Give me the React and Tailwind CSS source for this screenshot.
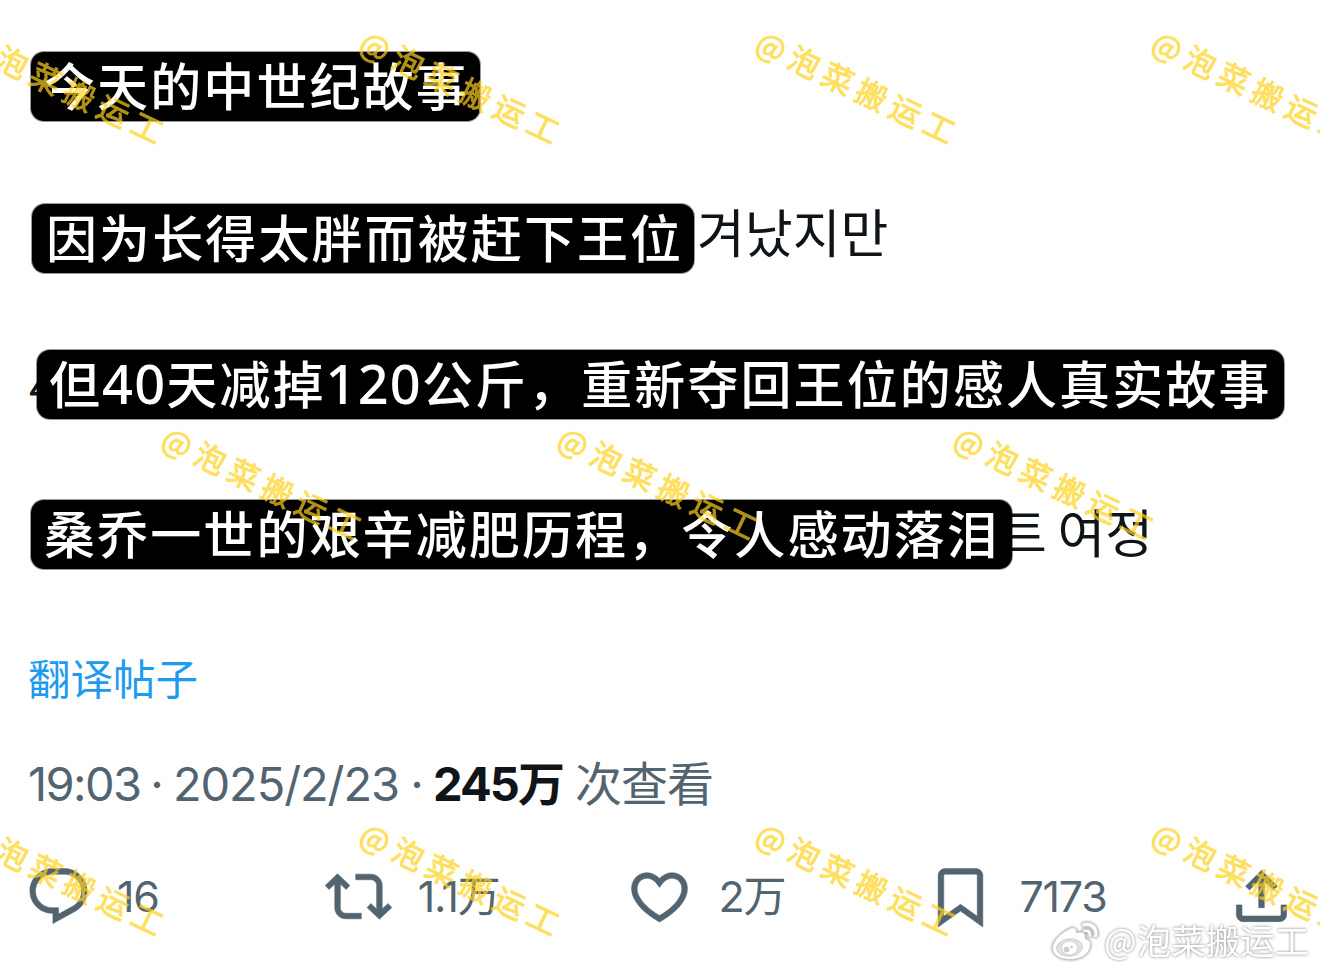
import React from 'react';

const WATERMARK = '@泡菜搬运工';

// Marcas de agua: posición del centro de la @ de cada repetición
const marks = [
  { x: -22, y: 48 }, { x: 374, y: 48 }, { x: 770, y: 48 }, { x: 1166, y: 48 },
  { x: 176, y: 444 }, { x: 572, y: 444 }, { x: 968, y: 444 },
  { x: -22, y: 840 }, { x: 374, y: 840 }, { x: 770, y: 840 }, { x: 1166, y: 840 },
];

const actions = [
  {
    label: '16',
    path: 'M1.751 10c0-4.42 3.584-8 8.005-8h4.366c4.49 0 8.129 3.64 8.129 8.13 0 2.96-1.607 5.68-4.196 7.11l-8.054 4.46v-3.69h-.067c-4.49.1-8.183-3.51-8.183-8.01zm8.005-6c-3.317 0-6.005 2.69-6.005 6 0 3.37 2.77 6.08 6.138 6.01l.351-.01h1.761v2.3l5.087-2.81c1.951-1.08 3.163-3.13 3.163-5.36 0-3.39-2.744-6.13-6.129-6.13H9.756z',
  },
  {
    label: '1.1万',
    path: 'M4.5 3.88l4.432 4.14-1.364 1.46L5.5 7.55V16c0 1.1.896 2 2 2H13v2H7.5c-2.209 0-4-1.79-4-4V7.55L1.432 9.48.068 8.02 4.5 3.88zM16.5 6H11V4h5.5c2.209 0 4 1.79 4 4v8.45l2.068-1.93 1.364 1.46-4.432 4.14-4.432-4.14 1.364-1.46 2.068 1.93V8c0-1.1-.896-2-2-2z',
  },
  {
    label: '2万',
    path: 'M16.697 5.5c-1.222-.06-2.679.51-3.89 2.16l-.805 1.09-.806-1.09C9.984 6.01 8.526 5.44 7.304 5.5c-1.243.07-2.349.78-2.91 1.91-.552 1.12-.633 2.78.479 4.82 1.074 1.97 3.257 4.27 7.129 6.61 3.87-2.34 6.052-4.64 7.126-6.61 1.111-2.04 1.03-3.7.477-4.82-.561-1.13-1.666-1.84-2.908-1.91zm4.187 7.69c-1.351 2.48-4.001 5.12-8.379 7.67l-.503.3-.504-.3c-4.379-2.55-7.029-5.19-8.382-7.67-1.36-2.5-1.41-4.86-.514-6.67.887-1.79 2.647-2.91 4.601-3.01 1.651-.09 3.368.56 4.798 2.01 1.429-1.45 3.146-2.1 4.796-2.01 1.954.1 3.714 1.22 4.601 3.01.896 1.81.846 4.17-.514 6.67z',
  },
  {
    label: '7173',
    path: 'M4 4.5C4 3.12 5.119 2 6.5 2h11C18.881 2 20 3.12 20 4.5v18.44l-8-5.71-8 5.71V4.5zM6.5 4c-.276 0-.5.22-.5.5v14.56l6-4.29 6 4.29V4.5c0-.28-.224-.5-.5-.5h-11z',
  },
  {
    label: '',
    path: 'M12 2.59l5.7 5.7-1.41 1.42L13 6.41V16h-2V6.41l-3.3 3.3-1.41-1.42L12 2.59zM21 15l-.02 3.51c0 1.38-1.12 2.49-2.5 2.49H5.5C4.11 21 3 19.88 3 18.5V15h2v3.5c0 .28.22.5.5.5h12.98c.28 0 .5-.22.5-.5L19 15h2z',
  },
];

const Caption = ({ className, children }) => (
  <div className={`h-[69px] shrink-0 rounded-[13px] bg-black text-white text-[51px] leading-[64px] font-medium tracking-[2.1px] whitespace-nowrap ring-1 ring-black/40 ${className}`}>
    {children}
  </div>
);

const Digits = ({ children }) => (
  <span className="text-[54px] leading-none tracking-[1.2px] font-medium font-['Noto_Sans',sans-serif]">{children}</span>
);

const WeiboLogo = () => (
  <svg viewBox="0 0 48 40" className="w-[48px] h-[40px]" fill="#fff" stroke="#c4c4c4" strokeWidth="0.7">
    <path d="M18 8c4-2.500 8-1.500 7.500 4 5-2 9-1 8.500 3.500-.3 1.500.1 2 1 2.500 3 1.200 5 3 4.500 6.500C38.500 33 30 38.500 19.500 38.500 9 38.500 1.500 34 1.500 27 1.500 20 10 12 18 8z" />
    <ellipse cx="18.500" cy="26.500" rx="13" ry="8.700" transform="rotate(-6 18.500 26.500)" fill="#e2e2e2" />
    <ellipse cx="18.500" cy="27" rx="8" ry="7" />
    <circle cx="15.500" cy="28.500" r="2.600" fill="#d0d0d0" />
    <circle cx="20.500" cy="26" r="1" fill="#d0d0d0" />
    <path d="M32 2c9-3 17 4.500 14.500 13.500-.7 2.200-4 1.500-3.500-1C44.200 9 39.500 4.500 33 5.500 30.500 5.900 30 2.700 32 2z" />
    <path d="M32.500 8.500c5-1.500 9 2 7.500 7-.6 1.600-3 1-2.700-.8.500-2.500-1.300-4-3.800-3.500-2 .4-2.600-2.100-1-2.700z" />
  </svg>
);

export default function App() {
  return (
    <main className="relative w-[1320px] h-[973px] overflow-hidden bg-white text-[#0f1419] font-['Inter','Noto_Sans_CJK_SC',sans-serif]">
      {/* Texto de la publicación */}
      <section lang="zh-CN" className="pt-[52px] font-['Noto_Sans_CJK_SC',sans-serif]">
        <div className="flex pl-[31px]">
          <Caption className="w-[449px] pl-[13px]">今天的中世纪故事</Caption>
        </div>
        <div className="flex pl-[32px] mt-[83px]">
          <Caption className="w-[662px] pl-[14px]">因为长得太胖而被赶下王位</Caption>
          <span lang="ko" className="ml-[3px] h-[69px] text-[52px] leading-[54px] font-['Noto_Sans_CJK_KR',sans-serif] whitespace-nowrap">겨났지만</span>
        </div>
        <div className="flex pl-[29px] mt-[77px]">
          <span className="w-[8px] h-[69px] overflow-hidden text-[48px] leading-[68px]">4</span>
          <Caption className="w-[1247px] pl-[12px]">
            但<Digits>40</Digits>天减掉<Digits>120</Digits>公斤，重新夺回王位的感人真实故事
          </Caption>
        </div>
        <div className="flex pl-[31px] mt-[81px]">
          <Caption className="relative z-10 w-[981px] pl-[13px]">桑乔一世的艰辛减肥历程，令人感动落泪</Caption>
          <span lang="ko" className="-ml-[13px] h-[69px] text-[52px] leading-[62px] [word-spacing:-4px] font-['Noto_Sans_CJK_KR',sans-serif] whitespace-nowrap">트 여정</span>
        </div>
      </section>

      <a className="block w-fit ml-[28px] mt-[78px] text-[42.5px] leading-[60px] text-[#1d9bf0] font-['Noto_Sans_CJK_SC',sans-serif]">翻译帖子</a>

      {/* Fecha y visualizaciones */}
      <p className="flex items-baseline ml-[28px] mt-[47px] h-[60px] text-[47px] leading-[60px] text-[#536471] whitespace-nowrap">
        <span className="w-[113px] tracking-[-1.6px]">19:03</span>
        <span className="w-[32px] text-center">·</span>
        <span className="w-[228px] tracking-[-1.1px]">2025/2/23</span>
        <span className="w-[32px] text-center">·</span>
        <span className="w-[142px] font-bold tracking-[-1.9px] text-[#0f1419]">245万</span>
        <span className="tracking-[-1px]">次查看</span>
      </p>

      {/* Acciones */}
      <div className="flex ml-[24.5px] mt-[49px]">
        {actions.map((action, i) => (
          <div key={i} className="flex shrink-0 items-center w-[300.8px] h-[67px] text-[#536471]">
            <svg viewBox="0 0 24 24" fill="currentColor" stroke="currentColor" strokeWidth="0.2" className="w-[67px] h-[67px]">
              <path d={action.path} />
            </svg>
            <span className="ml-[25.5px] text-[43px] leading-[58px] pb-[2px] tracking-[-1.2px] whitespace-nowrap">{action.label}</span>
          </div>
        ))}
      </div>

      {/* Marcas de agua */}
      {marks.map((m, i) => (
        <span
          key={i}
          className="absolute z-20 origin-[16px_24px] rotate-[25.7deg] text-[31px] leading-[48px] font-normal text-[#ffd21e] opacity-70 whitespace-nowrap tracking-[6.4px] [-webkit-text-stroke:1px_#ffd21e] font-['Noto_Sans_CJK_SC',sans-serif]"
          style={{ left: m.x - 13, top: m.y - 26 }}
        >
          {WATERMARK}
        </span>
      ))}

      <div className="absolute z-30 left-[1051px] top-[920px] flex items-center drop-shadow-[0_0_1.5px_rgba(0,0,0,0.5)]">
        <WeiboLogo />
        <span className="ml-[5px] -mt-[3px] text-[34.5px] leading-[44px] text-white whitespace-nowrap font-['Noto_Sans_CJK_SC',sans-serif]">{WATERMARK}</span>
      </div>
    </main>
  );
}
